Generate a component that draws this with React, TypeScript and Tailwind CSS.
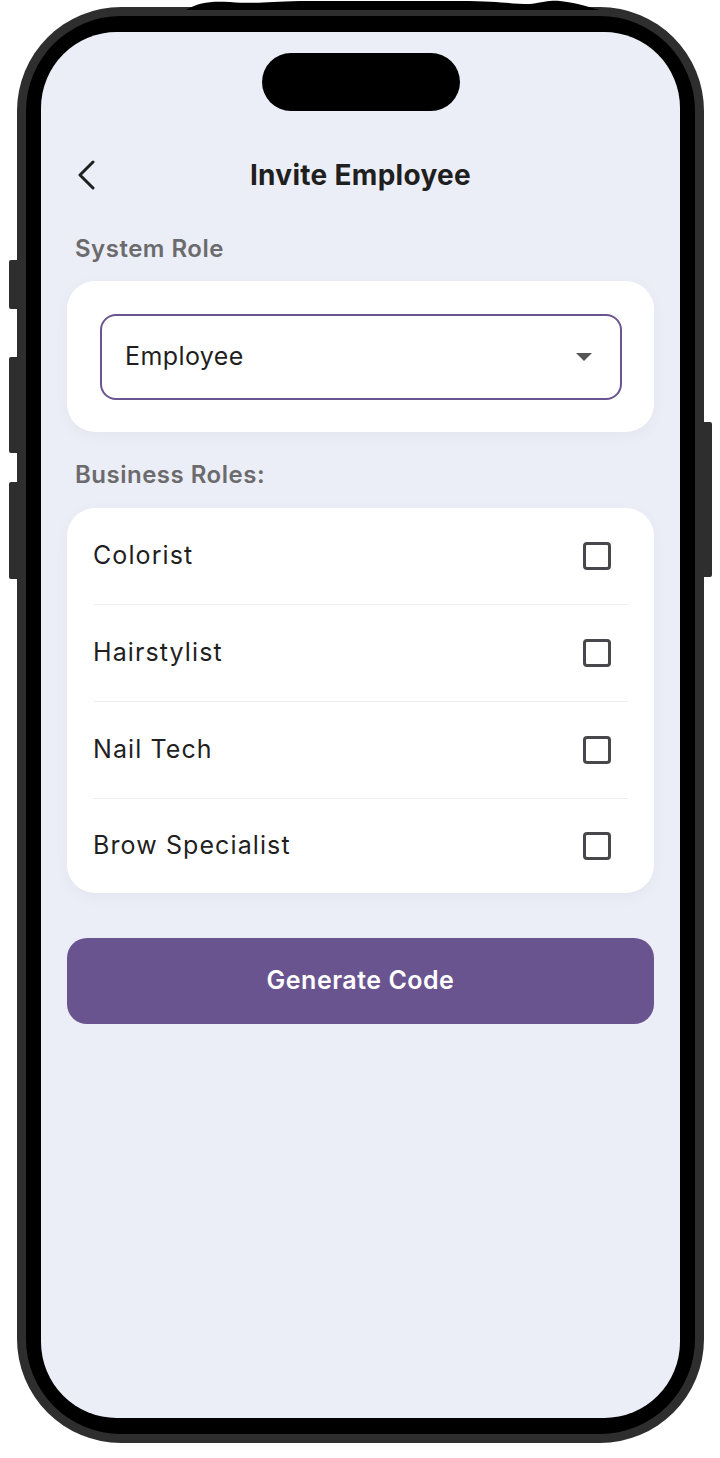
import React from "react";

const roles = ["Colorist", "Hairstylist", "Nail Tech", "Brow Specialist"];

export default function App() {
  return (
    <div className="relative w-[720px] h-[1458px] bg-white overflow-hidden" style={{ fontFamily: "Inter, 'Noto Sans', sans-serif" }}>
      {/* top edge shadow */}
      <svg className="absolute left-0 top-0" width="720" height="12" viewBox="0 0 720 12">
        <path d="M186 10 C 200 2, 210 1, 230 2 C 255 4, 265 2, 300 1 L 460 1 C 500 1, 510 4, 530 4 C 545 2, 550 0, 560 1 C 580 3, 590 8, 600 10 Z" fill="#000" />
      </svg>
      {/* side buttons */}
      <div className="absolute left-[9px] top-[260px] w-[9px] h-[49px] rounded-l-[2px] bg-[#2e2e2e]" />
      <div className="absolute left-[9px] top-[357px] w-[9px] h-[96px] rounded-l-[2px] bg-[#2e2e2e]" />
      <div className="absolute left-[9px] top-[482px] w-[9px] h-[97px] rounded-l-[2px] bg-[#2e2e2e]" />
      <div className="absolute left-[703px] top-[422px] w-[9px] h-[155px] rounded-r-[2px] bg-[#2e2e2e]" />

      <div className="ml-[17px] mt-[7px] w-[687px] h-[1436px] rounded-[104px] bg-[#2e2e2e] p-[9px]">
        <div className="w-full h-full rounded-[95px] bg-black pt-[16px] px-[15px]">
          <div className="w-[639px] h-[1386px] rounded-[76px] bg-[#eceef7] flex flex-col items-stretch px-[26px]">
            <div className="self-center mt-[21px] w-[198px] h-[58px] rounded-full bg-black" />

            {/* header */}
            <div className="relative mt-[36px] h-[56px] flex items-center justify-center">
              <svg className="absolute left-[9px] top-[13px]" width="22" height="30" viewBox="0 0 22 30" fill="none">
                <path d="M17 2 L4 15 L17 28" stroke="#1f1f1f" strokeWidth="3" strokeLinecap="round" strokeLinejoin="round" />
              </svg>
              <div className="text-[28px] font-bold text-[#1f1f1f] tracking-[0.3px]">Invite Employee</div>
            </div>

            <div className="mt-[31px] ml-[8px] text-[24px] leading-[30px] font-semibold text-[#6b6b6d] tracking-[0.5px]">System Role</div>

            <div className="mt-[17px] bg-white rounded-[28px] p-[33px] pb-[32px] pr-[32px] shadow-[0_4px_14px_rgba(60,60,100,0.05)]">
              <div className="h-[86px] rounded-[16px] border-[2.5px] border-[#6a5590] flex items-center justify-between pl-[23px] pr-[28px]">
                <span className="text-[25px] text-[#1f1f1f] tracking-[0.4px]">Employee</span>
                <svg width="16" height="8" viewBox="0 0 16 8">
                  <path d="M0 0 L16 0 L8 8 Z" fill="#555" />
                </svg>
              </div>
            </div>

            <div className="mt-[28px] ml-[8px] text-[24px] leading-[30px] font-semibold text-[#6b6b6d] tracking-[0.5px]">Business Roles:</div>

            <div className="mt-[18px] bg-white rounded-[28px] px-[26px] shadow-[0_4px_14px_rgba(60,60,100,0.05)]">
              {roles.map((r, i) => (
                <div key={r} className={"flex items-center justify-between " + (i < roles.length - 1 ? "h-[97px] border-b border-[#efeff2]" : "h-[94px]")}>
                  <span className="text-[25px] text-[#1f1f1f] tracking-[1.1px]">{r}</span>
                  <div className="mr-[17px] w-[28px] h-[28px] rounded-[4px] border-[3px] border-[#48484c]" />
                </div>
              ))}
            </div>

            <div className="mt-[45px] h-[86px] rounded-[20px] bg-[#69548f] flex items-center justify-center">
              <span className="text-[25px] font-semibold text-white tracking-[0.5px]">Generate Code</span>
            </div>
          </div>
        </div>
      </div>
    </div>
  );
}
